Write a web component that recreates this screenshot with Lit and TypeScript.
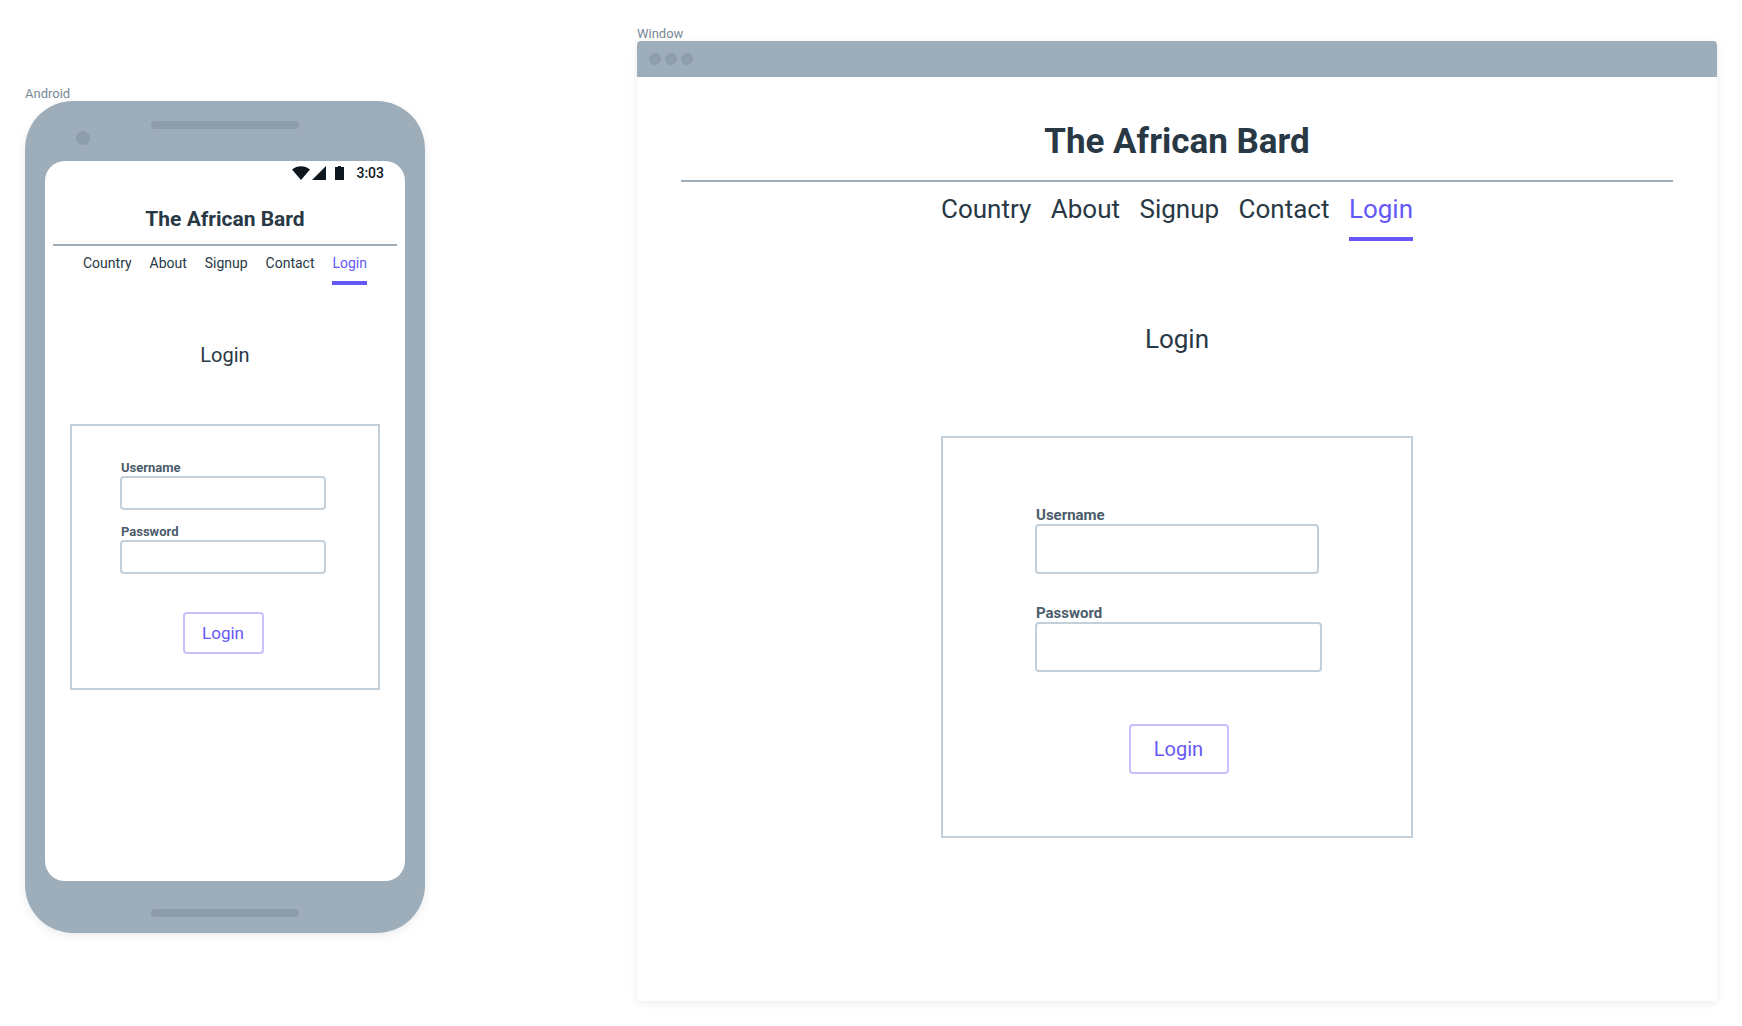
import { LitElement, html, css, svg } from "lit";
import { customElement, property } from "lit/decorators.js";

const NAV_ITEMS = ["Country", "About", "Signup", "Contact", "Login"];

/** Site content: title, navigation and the login form. */
@customElement("login-screen")
export class LoginScreen extends LitElement {
  @property({ type: Boolean, reflect: true }) compact = false;

  static styles = css`
    :host {
      display: block;
      --gutter: 44px;
      --top: 43px;
      --title: 35px;
      --title-line: 44px;
      --rule-gap: 16px;
      --nav: 26px;
      --nav-line: 36px;
      --nav-width: 472px;
      --nav-top: 9px;
      --nav-bottom: 10px;
      --heading: 26px;
      --heading-line: 36px;
      --heading-top: 80px;
      --heading-bottom: 79px;
      --card-width: 472px;
      --card-padding: 68px 89px 62px 92px;
      --name-width: 284px;
      --label: 15px;
      --label-line: 18px;
      --field-height: 50px;
      --field-gap: 30px;
      --action-gap: 52px;
      --button: 20px;
      --button-width: 100px;
      --button-height: 50px;
    }
    :host([compact]) {
      --gutter: 8px;
      --top: 20px;
      --title: 21px;
      --title-line: 28px;
      --rule-gap: 11px;
      --nav: 14px;
      --nav-line: 20px;
      --nav-width: 284px;
      --nav-top: 7px;
      --nav-bottom: 8px;
      --heading: 20px;
      --heading-line: 28px;
      --heading-top: 56px;
      --heading-bottom: 55px;
      --card-width: 310px;
      --card-padding: 34px 52px 34px 48px;
      --name-width: 100%;
      --label: 13px;
      --label-line: 16px;
      --field-height: 34px;
      --field-gap: 14px;
      --action-gap: 38px;
      --button: 17px;
      --button-width: 81px;
      --button-height: 42px;
    }
    .page {
      display: flex;
      flex-direction: column;
      align-items: center;
      padding: var(--top) var(--gutter) 0;
    }
    .title {
      margin: 0;
      font-size: var(--title);
      line-height: var(--title-line);
      font-weight: 700;
    }
    .rule {
      align-self: stretch;
      height: 2px;
      margin: var(--rule-gap) 0 0;
      border: 0;
      background: #9eadba;
    }
    .nav {
      display: flex;
      justify-content: space-between;
      width: 100%;
      max-width: var(--nav-width);
      padding-top: var(--nav-top);
    }
    .link {
      padding-bottom: var(--nav-bottom);
      border-bottom: 4px solid transparent;
      color: inherit;
      font-size: var(--nav);
      line-height: var(--nav-line);
      text-decoration: none;
    }
    .current {
      border-color: #6558f5;
      color: #6558f5;
    }
    .heading {
      margin: var(--heading-top) 0 var(--heading-bottom);
      font-size: var(--heading);
      line-height: var(--heading-line);
      font-weight: 400;
    }
    .card {
      box-sizing: border-box;
      display: flex;
      flex-direction: column;
      width: 100%;
      max-width: var(--card-width);
      padding: var(--card-padding);
      border: 2px solid #c3cfd9;
    }
    .label {
      padding-left: 1px;
      color: #4b5c6b;
      font-size: var(--label);
      line-height: var(--label-line);
      font-weight: 700;
    }
    .field {
      box-sizing: border-box;
      width: 100%;
      height: var(--field-height);
      padding: 0 12px;
      border: 2px solid #c3cfd9;
      border-radius: 4px;
      background: transparent;
      color: inherit;
      font: inherit;
    }
    .name {
      max-width: var(--name-width);
    }
    .field + .label {
      margin-top: var(--field-gap);
    }
    .submit {
      align-self: center;
      min-width: var(--button-width);
      height: var(--button-height);
      margin-top: var(--action-gap);
      padding: 0;
      border: 2px solid #c7c0fb;
      border-radius: 4px;
      background: transparent;
      color: #6558f5;
      font: inherit;
      font-size: var(--button);
    }
  `;

  render() {
    return html`
      <div class="page">
        <h1 class="title">The African Bard</h1>
        <hr class="rule" />
        <nav class="nav">
          ${NAV_ITEMS.map(
            (item) =>
              html`<a class="link ${item === "Login" ? "current" : ""}" href="#${item.toLowerCase()}">${item}</a>`
          )}
        </nav>
        <h2 class="heading">Login</h2>
        <form class="card" @submit=${(e: Event) => e.preventDefault()}>
          <label class="label" for="username">Username</label>
          <input class="field name" id="username" type="text" autocomplete="off" />
          <label class="label" for="password">Password</label>
          <input class="field" id="password" type="password" autocomplete="off" />
          <button class="submit" type="submit">Login</button>
        </form>
      </div>
    `;
  }
}

const wifiIcon = svg`<path d="M0 3.6C5 -1 13 -1 18 3.6L9 14Z" />`;
const signalIcon = svg`<path d="M14 0V14H0Z" />`;
const batteryIcon = svg`<path d="M3 0H6V1H9V14H0V1H3Z" />`;

@customElement("app-root")
export class AppRoot extends LitElement {
  static styles = css`
    :host {
      display: block;
      min-height: 100vh;
      background: #fff;
      color: #283845;
      font-family: Roboto, "Liberation Sans", sans-serif;
    }
    .board {
      display: grid;
      grid-template-columns: 400fr 1080fr;
      column-gap: 212px;
      align-items: start;
      padding: 26px 25px 24px;
    }
    .frame {
      margin: 0;
    }
    .phone-frame {
      padding-top: 60px;
    }
    .caption {
      color: #788896;
      font-size: 13px;
      line-height: 15px;
    }
    .phone {
      display: flex;
      flex-direction: column;
      padding: 0 20px;
      border-radius: 48px;
      background: #9eadba;
      box-shadow: 0 3px 10px rgba(0, 0, 0, 0.08);
    }
    .bezel-top {
      display: grid;
      grid-template-columns: 1fr 148px 1fr;
      height: 60px;
    }
    .camera {
      width: 14px;
      height: 14px;
      margin: 30px 0 0 31px;
      border-radius: 50%;
      background: #8e9dac;
    }
    .speaker {
      width: 148px;
      height: 8px;
      margin-top: 20px;
      border-radius: 4px;
      background: #8e9dac;
    }
    .bezel-bottom {
      display: flex;
      justify-content: center;
      height: 52px;
      padding-top: 8px;
      box-sizing: border-box;
    }
    .screen {
      box-sizing: border-box;
      min-height: 720px;
      border-radius: 20px;
      background: #fff;
    }
    .status {
      display: flex;
      align-items: center;
      justify-content: flex-end;
      height: 24px;
      padding-right: 21px;
      color: #10181f;
      font-size: 14px;
      font-weight: 500;
    }
    .icon {
      display: block;
      fill: currentColor;
    }
    .signal {
      margin: 0 9px 0 2px;
    }
    .time {
      margin-left: 12px;
    }
    .window {
      min-height: 960px;
      border-radius: 4px 4px 0 0;
      background: #fff;
      box-shadow: 0 2px 10px rgba(0, 0, 0, 0.08);
    }
    .bar {
      display: flex;
      align-items: center;
      gap: 4px;
      height: 36px;
      padding-left: 12px;
      border-radius: 4px 4px 0 0;
      background: #9eadba;
    }
    .dot {
      width: 12px;
      height: 12px;
      border-radius: 50%;
      background: #8e9dac;
    }
  `;

  render() {
    return html`
      <main class="board">
        <figure class="frame phone-frame">
          <figcaption class="caption">Android</figcaption>
          <div class="phone">
            <div class="bezel-top">
              <div class="camera"></div>
              <div class="speaker"></div>
            </div>
            <div class="screen">
              <div class="status">
                <svg class="icon" width="18" height="14" viewBox="0 0 18 14">${wifiIcon}</svg>
                <svg class="icon signal" width="14" height="14" viewBox="0 0 14 14">${signalIcon}</svg>
                <svg class="icon" width="9" height="14" viewBox="0 0 9 14">${batteryIcon}</svg>
                <span class="time">3:03</span>
              </div>
              <login-screen compact></login-screen>
            </div>
            <div class="bezel-bottom"><div class="speaker"></div></div>
          </div>
        </figure>
        <figure class="frame">
          <figcaption class="caption">Window</figcaption>
          <div class="window">
            <div class="bar">
              <div class="dot"></div>
              <div class="dot"></div>
              <div class="dot"></div>
            </div>
            <login-screen></login-screen>
          </div>
        </figure>
      </main>
    `;
  }
}
